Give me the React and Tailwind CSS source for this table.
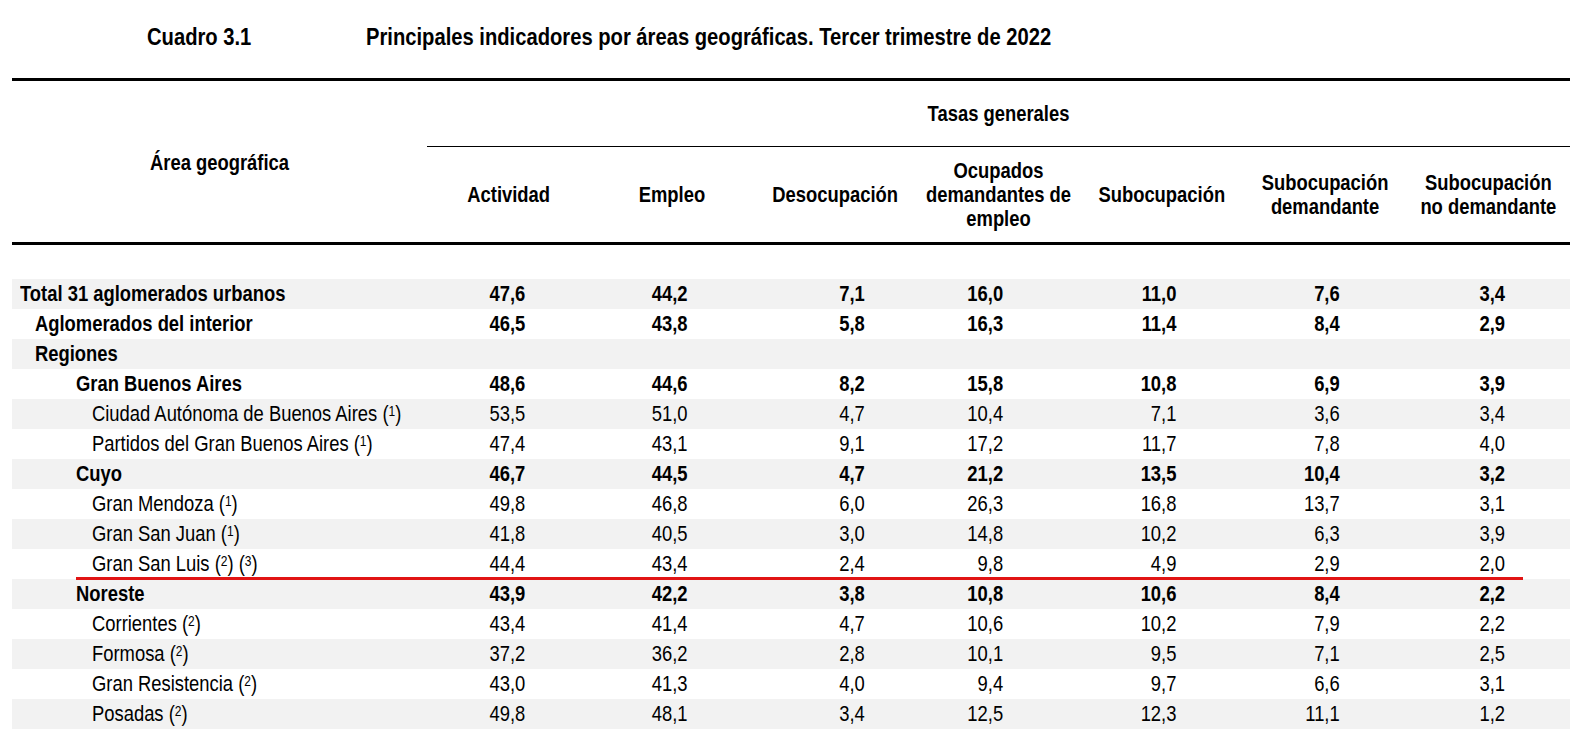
const rows = [
  { label: "Total 31 aglomerados urbanos", level: 0, bold: true, v: ["47,6", "44,2", "7,1", "16,0", "11,0", "7,6", "3,4"] },
  { label: "Aglomerados del interior", level: 1, bold: true, v: ["46,5", "43,8", "5,8", "16,3", "11,4", "8,4", "2,9"] },
  { label: "Regiones", level: 1, bold: true, v: [] },
  { label: "Gran Buenos Aires", level: 2, bold: true, v: ["48,6", "44,6", "8,2", "15,8", "10,8", "6,9", "3,9"] },
  { label: "Ciudad Autónoma de Buenos Aires", notes: ["1"], level: 3, v: ["53,5", "51,0", "4,7", "10,4", "7,1", "3,6", "3,4"] },
  { label: "Partidos del Gran Buenos Aires", notes: ["1"], level: 3, v: ["47,4", "43,1", "9,1", "17,2", "11,7", "7,8", "4,0"] },
  { label: "Cuyo", level: 2, bold: true, v: ["46,7", "44,5", "4,7", "21,2", "13,5", "10,4", "3,2"] },
  { label: "Gran Mendoza", notes: ["1"], level: 3, v: ["49,8", "46,8", "6,0", "26,3", "16,8", "13,7", "3,1"] },
  { label: "Gran San Juan", notes: ["1"], level: 3, v: ["41,8", "40,5", "3,0", "14,8", "10,2", "6,3", "3,9"] },
  { label: "Gran San Luis", notes: ["2", "3"], level: 3, v: ["44,4", "43,4", "2,4", "9,8", "4,9", "2,9", "2,0"] },
  { label: "Noreste", level: 2, bold: true, v: ["43,9", "42,2", "3,8", "10,8", "10,6", "8,4", "2,2"] },
  { label: "Corrientes", notes: ["2"], level: 3, v: ["43,4", "41,4", "4,7", "10,6", "10,2", "7,9", "2,2"] },
  { label: "Formosa", notes: ["2"], level: 3, v: ["37,2", "36,2", "2,8", "10,1", "9,5", "7,1", "2,5"] },
  { label: "Gran Resistencia", notes: ["2"], level: 3, v: ["43,0", "41,3", "4,0", "9,4", "9,7", "6,6", "3,1"] },
  { label: "Posadas", notes: ["2"], level: 3, v: ["49,8", "48,1", "3,4", "12,5", "12,3", "11,1", "1,2"] },
];

const indent = ["pl-[8px]", "pl-[23px]", "pl-[64px]", "pl-[80px]"];
const numPad = ["pr-[65px]", "pr-[66px]", "pr-[52px]", "pr-[77px]", "pr-[67px]", "pr-[67px]", "pr-[65px]"];

const heads = [
  ["Actividad"],
  ["Empleo"],
  ["Desocupación"],
  ["Ocupados", "demandantes de", "empleo"],
  ["Subocupación"],
  ["Subocupación", "demandante"],
  ["Subocupación", "no demandante"],
];

// the source face is a tall condensed grotesque; Arial-width glyphs stretched upright stand in for it
const tall = "scale-y-[1.2]";

function Label({ row }) {
  return (
    <>
      {row.label}
      {row.notes &&
        row.notes.map((n) => (
          <span key={n}>
            {" ("}
            <sup className="text-[12px] leading-none relative top-[-4px]">{n}</sup>
            {")"}
          </span>
        ))}
    </>
  );
}

export default function App() {
  return (
    <div
      className="w-[1582px] h-[733px] overflow-hidden bg-white text-black"
      style={{ fontFamily: '"Liberation Sans", Arial, sans-serif' }}
    >
      {/* title */}
      <div className="flex pt-[26px] pl-[147px] h-[78px] text-[20.2px] leading-[26px] font-bold">
        <span className={`w-[219px] ${tall}`}>Cuadro 3.1</span>
        <span className={tall}>Principales indicadores por áreas geográficas. Tercer trimestre de 2022</span>
      </div>

      <div className="relative ml-[12px] w-[1558px]">
        <div className="grid grid-cols-[415px_repeat(7,1fr)] border-t-[3px] border-b-[3px] border-black text-[18.4px] font-bold leading-[24px]">
          <div className="row-span-2 flex items-center justify-center pt-[3px]">
            <span className={tall}>Área geográfica</span>
          </div>
          <div className="col-span-7 h-[66px] flex items-center justify-center border-b border-black">
            <span className={tall}>Tasas generales</span>
          </div>
          {heads.map((h, i) => (
            <div key={i} className="h-[95px] flex flex-col items-center justify-center text-center whitespace-nowrap">
              {h.map((l) => (
                <span key={l} className={tall}>
                  {l}
                </span>
              ))}
            </div>
          ))}
        </div>

        <div className="h-[34px]" />

        {rows.map((r, i) => (
          <div
            key={r.label}
            className={`grid grid-cols-[415px_repeat(7,1fr)] h-[30px] items-center text-[18.4px] leading-[30px] ${
              i % 2 === 0 ? "bg-[#f2f2f2]" : "bg-white"
            } ${r.bold ? "font-bold" : "font-normal"}`}
          >
            <div className={`${indent[r.level]} whitespace-nowrap ${tall}`}>
              <Label row={r} />
            </div>
            {numPad.map((p, j) => (
              <div key={j} className={`text-right ${p} ${tall}`}>
                {r.v[j] || ""}
              </div>
            ))}
          </div>
        ))}

        {/* red mark drawn over the table */}
        <div className="absolute left-[64px] top-[499px] w-[1447px] h-[3px] bg-[#e11414]" />
      </div>
    </div>
  );
}
